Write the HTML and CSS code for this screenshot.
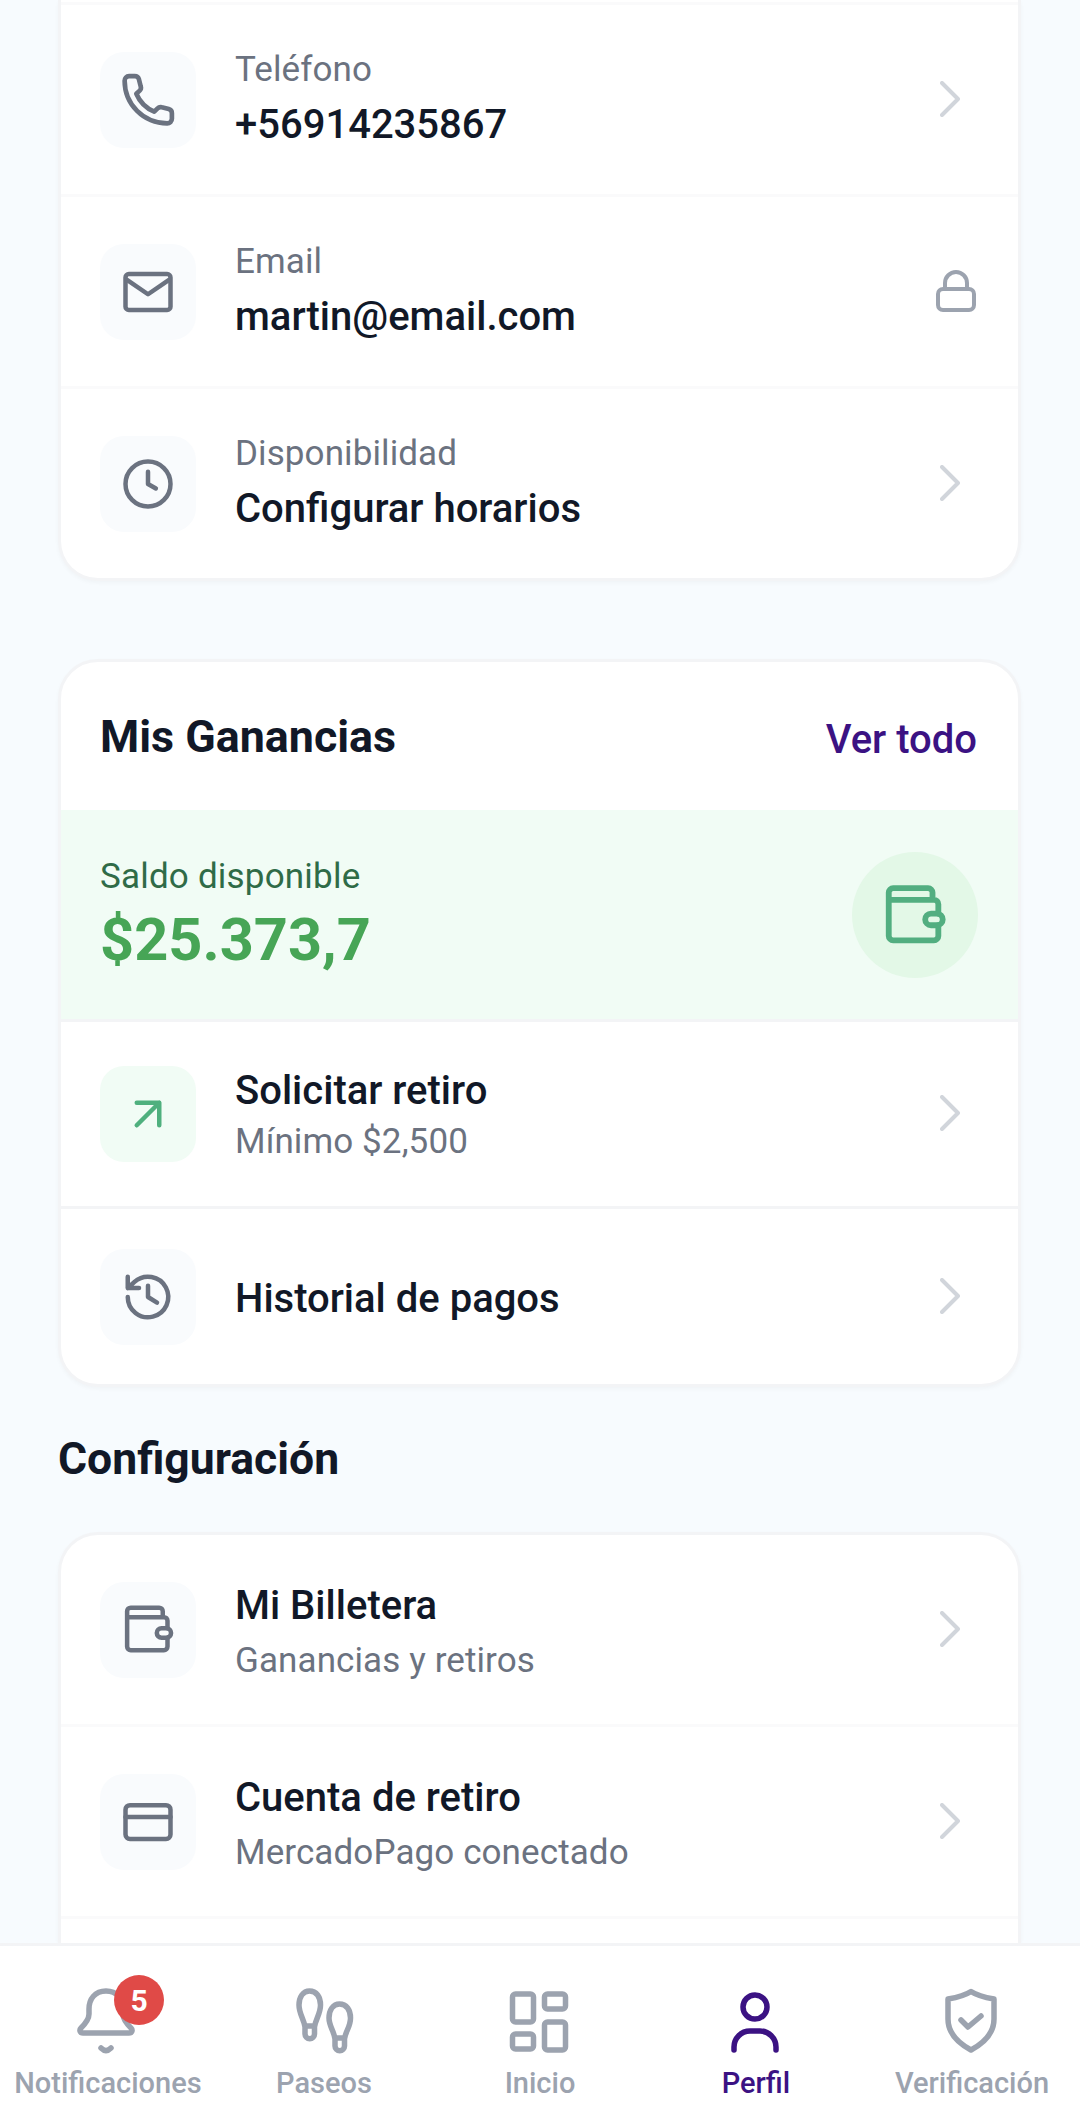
FILE: index.html
```html
<!DOCTYPE html>
<html lang="es">
<head>
<meta charset="utf-8">
<title>Perfil</title>
<link rel="stylesheet" href="styles.css">
</head>
<body>
<div class="app">
  <main class="content">
    <section class="card card-cut">
      <div class="cut-top"></div>
      <div class="row row-info">
        <div class="ic-box"><svg class="ic ic-phone" viewBox="1.600 1.600 20.800 20.800"><path d="M4.700 2.800h2.200c.8 0 1.400.5 1.600 1.200l.7 2.800c.2.600 0 1.200-.4 1.600L7.500 9.600c1.200 2.800 3.800 5.600 6.900 6.900l1.300-1.300c.4-.4 1-.6 1.600-.4l2.700.7c.7.200 1.200.8 1.200 1.600v2.100c0 1-.8 1.800-1.800 1.800C10.300 21 3 13.700 3 4.600c0-1 .7-1.800 1.700-1.800z"/></svg></div>
        <div class="txt"><div class="label">Teléfono</div><div class="value">+56914235867</div></div>
        <svg class="chev" viewBox="0 0 20 36"><path d="M2 2l16 16L2 34"/></svg>
      </div>
      <div class="row row-info">
        <div class="ic-box"><svg class="ic" viewBox="0 0 24 24"><rect x="2" y="4" width="20" height="16" rx="1.500"/><path d="M2.500 6.500L12 13l9.500-6.500"/></svg></div>
        <div class="txt"><div class="label">Email</div><div class="value">martin@email.com</div></div>
        <svg class="lock" viewBox="0 0 40 42"><rect x="2" y="19" width="36" height="21" rx="5"/><path d="M9 19v-6a11 11 0 0 1 22 0v6"/></svg>
      </div>
      <div class="row row-info row-last">
        <div class="ic-box"><svg class="ic" viewBox="0 0 24 24"><circle cx="12" cy="12" r="10"/><path d="M12 6.500V12l3.500 2"/></svg></div>
        <div class="txt"><div class="label">Disponibilidad</div><div class="value">Configurar horarios</div></div>
        <svg class="chev" viewBox="0 0 20 36"><path d="M2 2l16 16L2 34"/></svg>
      </div>
    </section>

    <section class="card card-earn">
      <header class="earn-head">
        <h2 class="earn-title">Mis Ganancias</h2>
        <span class="see-all">Ver todo</span>
      </header>
      <div class="balance">
        <div>
          <div class="bal-label">Saldo disponible</div>
          <div class="bal-amount">$25.373,7</div>
        </div>
        <div class="bal-circle"><svg class="ic-wallet-lg" viewBox="0 0 24 24"><path d="M20 11.500V8.300c0-.8-.7-1.500-1.500-1.500H18V4.300c0-.8-.7-1.500-1.500-1.500h-12C3.700 2.800 3 3.500 3 4.300v14.900c0 .8.7 1.500 1.500 1.500h14c.8 0 1.500-.7 1.500-1.500v-3.700M3 6.800h15"/><rect x="15.500" y="11.500" width="6" height="4" rx="2"/></svg></div>
      </div>
      <div class="row row-pay row-strong">
        <div class="ic-box ic-box-green"><svg class="ic ic-green" viewBox="0 0 24 24"><path d="M7 7h10v10M7 17L17 7"/></svg></div>
        <div class="txt"><div class="title title-tight">Solicitar retiro</div><div class="label">Mínimo $2,500</div></div>
        <svg class="chev" viewBox="0 0 20 36"><path d="M2 2l16 16L2 34"/></svg>
      </div>
      <div class="row row-hist row-last">
        <div class="ic-box"><svg class="ic" viewBox="0 0 24 24"><path d="M3 12a9 9 0 1 0 3-6.700L3 8M3 3v5h5M12 7v5l4 2.500"/></svg></div>
        <div class="txt txt-shift"><div class="title">Historial de pagos</div></div>
        <svg class="chev" viewBox="0 0 20 36"><path d="M2 2l16 16L2 34"/></svg>
      </div>
    </section>

    <h2 class="section-title">Configuración</h2>

    <section class="card card-open">
      <div class="row row-conf">
        <div class="ic-box"><svg class="ic ic-wallet" viewBox="0 0 24 24"><path d="M20 11.500V8.300c0-.8-.7-1.500-1.500-1.500H18V4.300c0-.8-.7-1.500-1.500-1.500h-12C3.700 2.800 3 3.500 3 4.300v14.900c0 .8.7 1.500 1.500 1.500h14c.8 0 1.500-.7 1.500-1.500v-3.700M3 6.800h15"/><rect x="15.500" y="11.500" width="6" height="4" rx="2"/></svg></div>
        <div class="txt txt-shift"><div class="title">Mi Billetera</div><div class="label">Ganancias y retiros</div></div>
        <svg class="chev" viewBox="0 0 20 36"><path d="M2 2l16 16L2 34"/></svg>
      </div>
      <div class="row row-conf">
        <div class="ic-box"><svg class="ic" viewBox="0 0 24 24"><rect x="2" y="4.500" width="20" height="15" rx="2"/><path d="M2 9.800h20"/></svg></div>
        <div class="txt txt-shift"><div class="title">Cuenta de retiro</div><div class="label">MercadoPago conectado</div></div>
        <svg class="chev" viewBox="0 0 20 36"><path d="M2 2l16 16L2 34"/></svg>
      </div>
    </section>
  </main>

  <nav class="nav">
    <div class="tab">
      <div class="tab-icon">
        <svg class="nav-ic" viewBox="-35 0 72 76"><path d="M-1 8c-11 0-17 8-17 18v5c0 5-3 9-8 14-2 2-1 5 2 5h46c3 0 4-3 2-5-5-5-8-9-8-14v-5c0-10-6-18-17-18z"/><path d="M-6 65q5 5 10 0"/></svg>
        <span class="badge">5</span>
      </div>
      <span class="tab-label">Notificaciones</span>
    </div>
    <div class="tab">
      <div class="tab-icon"><svg class="nav-ic" viewBox="-37.500 0 72 76"><path d="M-16 8c7 0 11 6 11 14 0 9-5 14-6 22v7a4.500 4.500 0 0 1-9.500 0v-7c-1-8-6-13-6-22 0-8 4-14 10.500-14zM-20 43h9"/><path d="M14 21c7 0 11 6 11 14 0 9-5 13-6 21v7a4.500 4.500 0 0 1-9.500 0v-7c-1-8-6-13-6-21 0-8 4-14 10.500-14zM10 55h9"/></svg></div>
      <span class="tab-label">Paseos</span>
    </div>
    <div class="tab">
      <div class="tab-icon"><svg class="nav-ic" viewBox="-35 0 72 76"><rect x="-26.500" y="11" width="21" height="28" rx="3"/><rect x="-26.500" y="51" width="21" height="15" rx="3"/><rect x="5.500" y="11" width="21" height="15" rx="3"/><rect x="5.500" y="39" width="21" height="28" rx="3"/></svg></div>
      <span class="tab-label">Inicio</span>
    </div>
    <div class="tab tab-active">
      <div class="tab-icon"><svg class="nav-ic" viewBox="-35 0 72 76"><circle cx="0" cy="24" r="12"/><path d="M-21 67v-3a16 16 0 0 1 16-16H5a16 16 0 0 1 16 16v3"/></svg></div>
      <span class="tab-label">Perfil</span>
    </div>
    <div class="tab">
      <div class="tab-icon"><svg class="nav-ic" viewBox="-35 0 72 76"><path d="M0 8.500c6 4 14 6 23 7.500v20c0 15-10 24-23 31-13-7-23-16-23-31V16c9-1.500 17-3.500 23-7.500z"/><path d="M-10 37l7 7 13-11"/></svg></div>
      <span class="tab-label">Verificación</span>
    </div>
  </nav>
</div>
</body>
</html>
```
FILE: styles.css
```css
* { box-sizing: border-box; }
html, body { margin: 0; padding: 0; }
body { font-family: Roboto, "Liberation Sans", sans-serif; background: #f7fbfe; color: #111827; }

.app { height: 100vh; display: flex; flex-direction: column; overflow: hidden; }
.content { flex: 1; min-height: 0; overflow: hidden; padding: 0 59px 0 58px; display: flex; flex-direction: column; }

.card { flex: none; background: #fff; border: 3px solid #f3f4f6; border-radius: 40px; box-shadow: 0 2px 4px rgba(17,24,39,.03); overflow: hidden; }
.card-cut { border-top: 0; border-top-left-radius: 0; border-top-right-radius: 0; }
.cut-top { height: 5px; border-bottom: 3px solid #fafafb; }
.card-earn { margin-top: 78px; }
.card-open { flex: 1 0 auto; border-bottom: 0; border-bottom-left-radius: 0; border-bottom-right-radius: 0; }

.row { display: flex; align-items: center; padding: 0 38px 0 39px; border-bottom: 3px solid #fafafb; }
.row-last { border-bottom: 0; }
.row-strong { border-bottom-color: #f3f4f6; }
.row-info { height: 192px; }
.row-info.row-last { height: 189px; }
.row-pay { height: 187px; }
.row-hist { height: 175px; }
.row-conf { height: 192px; }

.ic-box { flex: none; width: 96px; height: 96px; border-radius: 24px; background: #f9fbfd; display: flex; align-items: center; justify-content: center; }
.ic-box-green { background: #f1fcf5; }
.ic { width: 54px; height: 54px; fill: none; stroke: #6b7280; stroke-width: 2; stroke-linecap: round; stroke-linejoin: round; }
.ic-phone { stroke-width: 1.800; }
.ic-wallet { width: 57px; height: 57px; stroke-width: 1.900; }
.ic-green { stroke: #4fb07e; }

.txt { flex: 1; min-width: 0; margin-left: 39px; }
.txt-shift { padding-top: 4px; }
.label { font-size: 35px; line-height: 44px; color: #6b7280; letter-spacing: .1px; }
.value { font-size: 40px; line-height: 52px; font-weight: 500; color: #111827; margin-top: 7px; }
.title { font-size: 40px; line-height: 50px; font-weight: 500; color: #111827; }
.row-conf .title { margin-bottom: 8px; }
.title-tight { margin-bottom: 4px; padding-top: 2px; }

.chev { flex: none; width: 20px; height: 36px; margin: 0 20px 2px 0; fill: none; stroke: #d1d5db; stroke-width: 4; stroke-linecap: round; stroke-linejoin: round; }
.lock { flex: none; width: 40px; height: 42px; margin: 0 4px 2px 0; fill: none; stroke: #9ca3af; stroke-width: 4; stroke-linecap: round; stroke-linejoin: round; }

.earn-head { height: 148px; display: flex; align-items: center; justify-content: space-between; padding: 0 41px 0 39px; }
.earn-title { margin: 0; font-size: 44.800px; font-weight: 700; color: #111827; }
.see-all { font-size: 40px; font-weight: 500; color: #3b1283; padding-top: 6px; }

.balance { height: 212px; background: #f1fcf5; border-bottom: 3px solid #f3f4f6; display: flex; align-items: center; justify-content: space-between; padding: 0 40px 0 39px; }
.bal-label { font-size: 35px; line-height: 44px; color: #2f6b47; letter-spacing: .2px; }
.bal-amount { font-size: 59.500px; line-height: 68px; font-weight: 700; color: #47a556; margin-top: 7px; }
.bal-circle { width: 126px; height: 126px; border-radius: 50%; background: #e3f8e7; display: flex; align-items: center; justify-content: center; }
.ic-wallet-lg { width: 70px; height: 70px; fill: none; stroke: #52ae80; stroke-width: 2; stroke-linecap: round; stroke-linejoin: round; }

.section-title { flex: none; margin: 44px 0 0; font-size: 44.500px; line-height: 56px; font-weight: 700; color: #111827; height: 101px; }

.nav { flex: none; height: 170px; background: #fff; border-top: 3px solid #f3f4f6; display: grid; grid-template-columns: repeat(5, 1fr); padding-top: 37px; }
.tab { display: flex; flex-direction: column; align-items: center; }
.tab-icon { position: relative; width: 72px; height: 76px; }
.nav-ic { display: block; width: 72px; height: 76px; fill: none; stroke: #9ca3af; stroke-width: 5.500; stroke-linecap: round; stroke-linejoin: round; }
.tab-label { font-size: 29px; line-height: 38px; font-weight: 500; color: #9ca3af; white-space: nowrap; margin-top: 5px; }
.tab-active .nav-ic { stroke: #3b1283; }
.tab-active .tab-label { color: #3b1283; }
.badge { position: absolute; left: 42px; top: -8px; width: 50px; height: 50px; border-radius: 50%; background: #e04a47; color: #fff; font-size: 30px; font-weight: 700; display: flex; align-items: center; justify-content: center; }
```
